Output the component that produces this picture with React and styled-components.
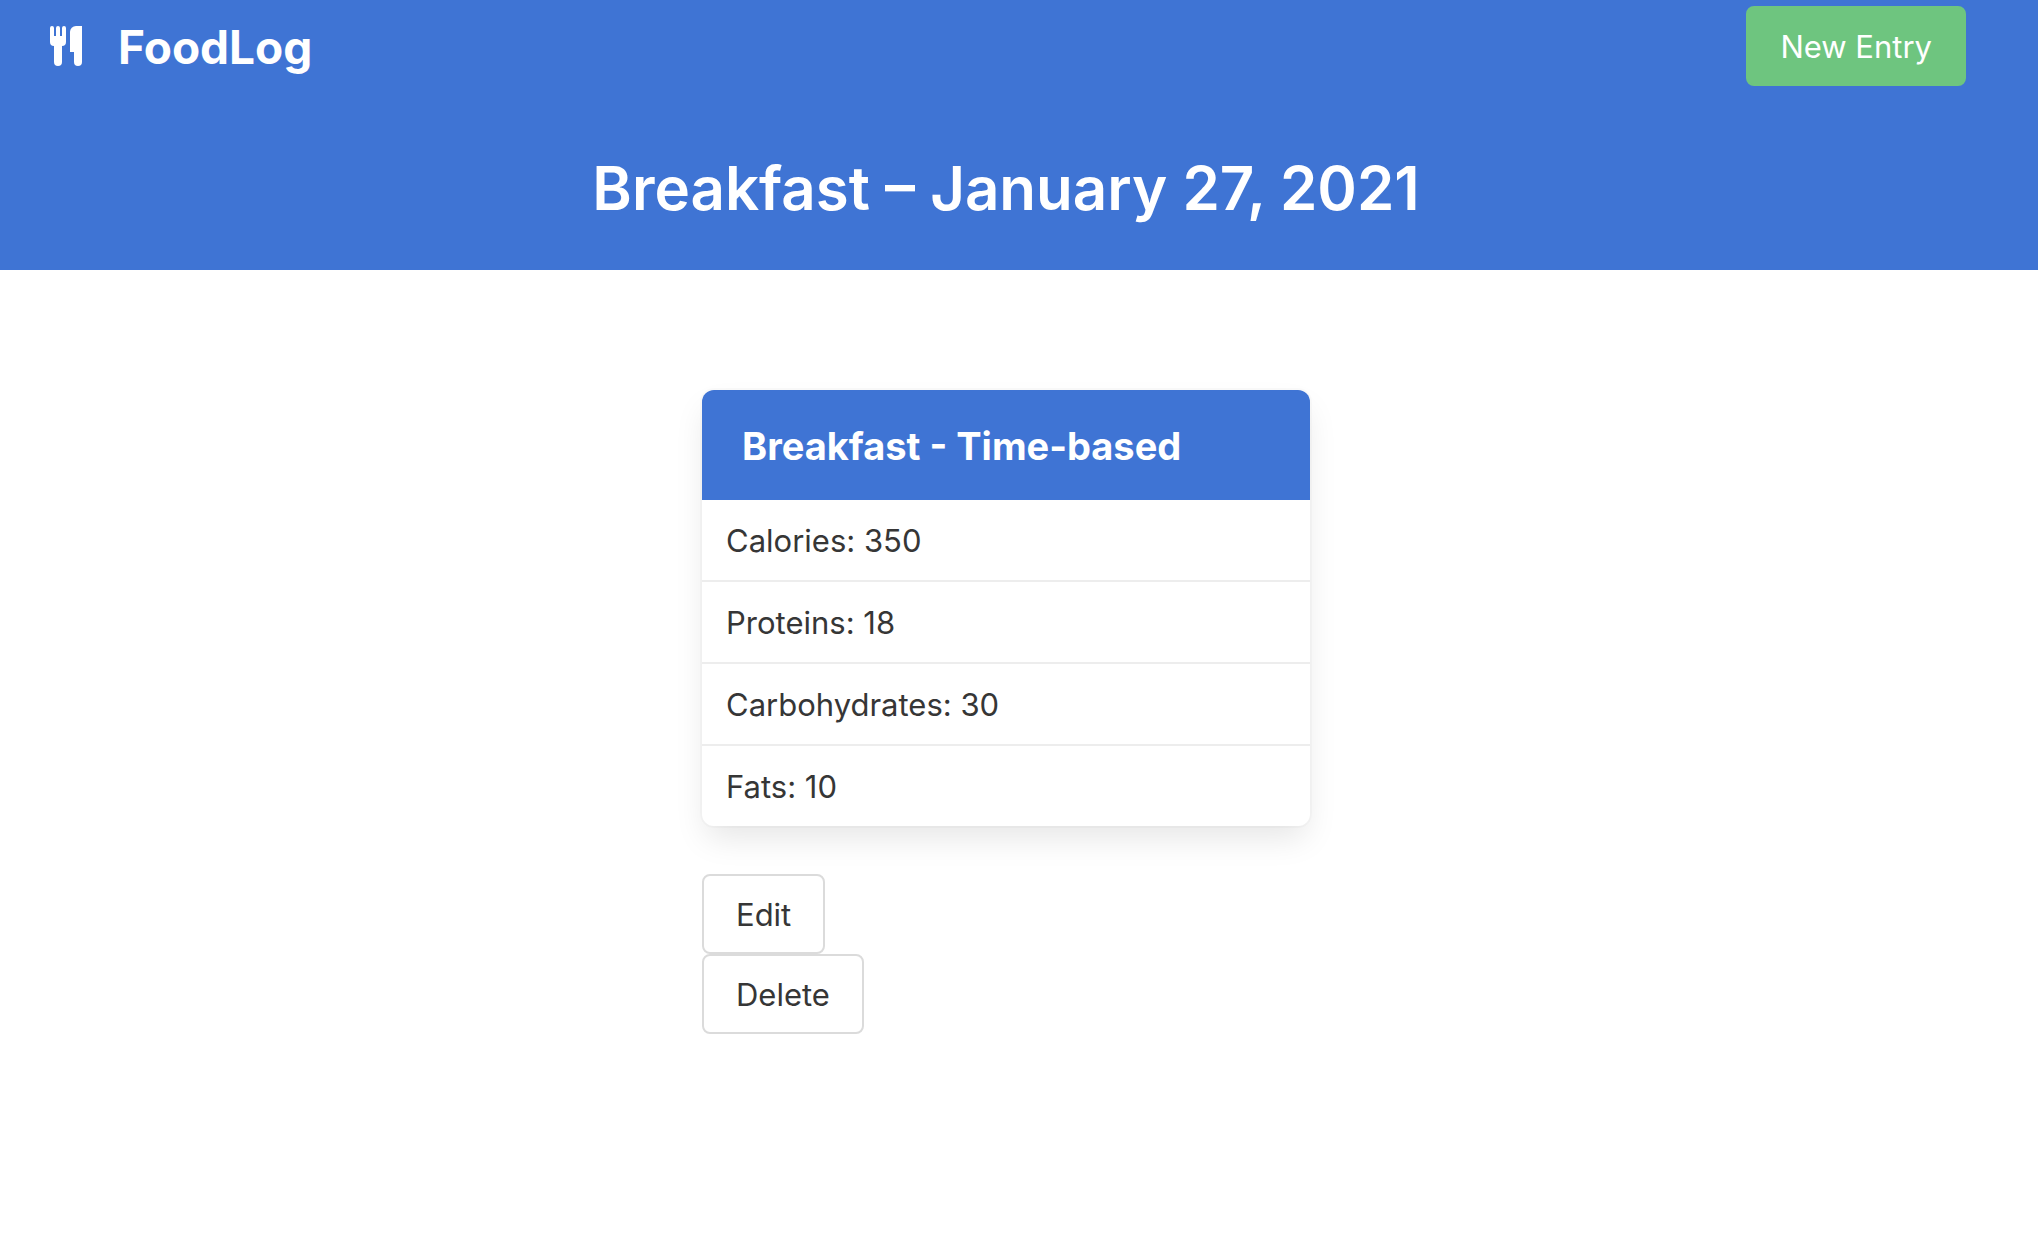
import React from 'react';
import styled, { createGlobalStyle } from 'styled-components';

const GlobalStyle = createGlobalStyle`
  *, *::before, *::after { box-sizing: border-box; }
  body {
    margin: 0;
    background: #ffffff;
    color: #363636;
    font-family: Inter, "Liberation Sans", sans-serif;
    font-size: 31px;
    line-height: 48px;
  }
`;

const Header = styled.header`
  background: #3f74d4;
  color: #ffffff;
`;

const Nav = styled.nav`
  display: flex;
  align-items: center;
  justify-content: space-between;
  padding: 6px 72px 6px 46px;
`;

const Brand = styled.a`
  display: flex;
  align-items: center;
  gap: 32px;
  color: inherit;
  text-decoration: none;
`;

const BrandName = styled.span`
  padding-top: 2px;
  font-size: 46px;
  font-weight: 700;
`;

const Button = styled.button`
  height: 80px;
  padding: 2px 32px 0;
  border: 2px solid ${({ $primary }) => ($primary ? '#6ec57f' : '#dbdbdb')};
  border-radius: 8px;
  background: ${({ $primary }) => ($primary ? '#6ec57f' : '#ffffff')};
  color: ${({ $primary }) => ($primary ? '#ffffff' : '#363636')};
  font: inherit;
  cursor: pointer;
`;

const Title = styled.h1`
  margin: 0;
  padding: 60px 26px 46px 0;
  font-size: 60px;
  font-weight: 600;
  line-height: 72px;
  text-align: center;
`;

const Main = styled.main`
  display: flex;
  justify-content: center;
  padding: 120px 26px 48px 0;
`;

const Column = styled.div`
  width: 608px;
  max-width: 100%;
`;

const Panel = styled.section`
  margin-bottom: 48px;
  border-radius: 12px;
  box-shadow: 0 16px 32px -4px rgba(10, 10, 10, 0.1), 0 0 0 2px rgba(10, 10, 10, 0.02);
`;

const PanelHeading = styled.h2`
  margin: 0;
  padding: 31px 40px 29px;
  border-radius: 12px 12px 0 0;
  background: #3f74d4;
  color: #ffffff;
  font-size: 38px;
  font-weight: 700;
  line-height: 50px;
`;

const Facts = styled.ul`
  margin: 0;
  padding: 0;
  list-style: none;
`;

const Fact = styled.li`
  padding: 17px 24px 15px;

  &:not(:last-child) {
    border-bottom: 2px solid #ededed;
  }
`;

const Actions = styled.div`
  display: flex;
  flex-direction: column;
  align-items: flex-start;
`;

const facts = [
  { label: 'Calories', value: 350 },
  { label: 'Proteins', value: 18 },
  { label: 'Carbohydrates', value: 30 },
  { label: 'Fats', value: 10 },
];

function CutleryIcon() {
  return (
    <svg width="40" height="40" viewBox="0 0 20 20" fill="currentColor" aria-hidden="true">
      <path d="M18 11v7a2 2 0 0 1-4 0v-5h-2V3a3 3 0 0 1 3-3h3v11zM4 10a2 2 0 0 1-2-2V1a1 1 0 0 1 2 0v4h1V1a1 1 0 0 1 2 0v4h1V1a1 1 0 0 1 2 0v7a2 2 0 0 1-2 2v8a2 2 0 0 1-4 0v-8z" />
    </svg>
  );
}

export default function App() {
  return (
    <>
      <GlobalStyle />
      <Header>
        <Nav>
          <Brand href="#">
            <CutleryIcon />
            <BrandName>FoodLog</BrandName>
          </Brand>
          <Button type="button" $primary>New Entry</Button>
        </Nav>
        <Title>Breakfast – January 27, 2021</Title>
      </Header>
      <Main>
        <Column>
          <Panel>
            <PanelHeading>Breakfast - Time-based</PanelHeading>
            <Facts>
              {facts.map(({ label, value }) => (
                <Fact key={label}>{`${label}: ${value}`}</Fact>
              ))}
            </Facts>
          </Panel>
          <Actions>
            <Button type="button">Edit</Button>
            <Button type="button">Delete</Button>
          </Actions>
        </Column>
      </Main>
    </>
  );
}
